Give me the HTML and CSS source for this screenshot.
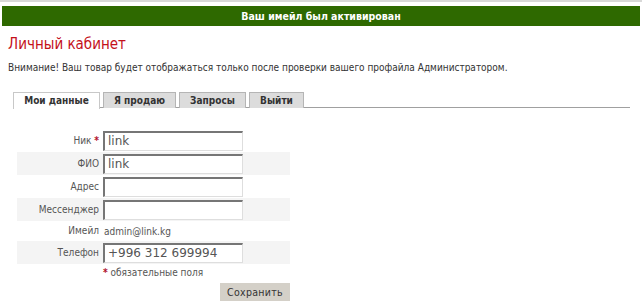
FILE: index.html
```html
<!DOCTYPE html>
<html lang="ru">
<head>
<meta charset="utf-8">
<link rel="stylesheet" href="styles.css">
</head>
<body>
<div class="topline"></div>
<div class="banner">Ваш имейл был активирован</div>
<h1 class="title">Личный кабинет</h1>
<p class="notice">Внимание! Ваш товар будет отображаться только после проверки вашего профайла Администратором.</p>
<div class="tabs">
  <span class="tab active">Мои данные</span>
  <span class="tab">Я продаю</span>
  <span class="tab">Запросы</span>
  <span class="tab">Выйти</span>
</div>
<div class="form">
  <div class="row"><span class="label">Ник <span class="req">*</span></span><span class="input">link</span></div>
  <div class="row alt"><span class="label">ФИО</span><span class="input">link</span></div>
  <div class="row"><span class="label">Адрес</span><span class="input"></span></div>
  <div class="row alt"><span class="label">Мессенджер</span><span class="input"></span></div>
  <div class="row plain"><span class="label">Имейл</span><span class="value">admin@link.kg</span></div>
  <div class="row alt"><span class="label">Телефон</span><span class="input">+996 312 699994</span></div>
  <div class="note"><span class="req">*</span> обязательные поля</div>
  <div class="actions"><span class="btn">Сохранить</span></div>
</div>
</body>
</html>
```
FILE: styles.css
```css
* { box-sizing: border-box; }
html, body { margin: 0; padding: 0; background: #fff; }
body { font-family: "DejaVu Sans Condensed", "Liberation Sans", sans-serif; font-size: 10px; color: #333; }
.topline { height: 2px; background: #d8d8d8; }
.banner { margin: 4px 2px 0 2px; height: 20px; background: #2e6900; color: #fff; font-weight: bold; text-align: center; line-height: 20px; font-size: 10.5px; }
.title { margin: 9px 0 0 8px; font-size: 15px; font-weight: normal; color: #c4101a; line-height: 18px; }
.notice { margin: 8px 0 0 8px; line-height: 14px; color: #333; }
.tabs { display: flex; gap: 3px; margin: 17px 12px 0 13px; border-bottom: 1px solid #a0a0a0; height: 16px; }
.tab { flex: none; height: 16px; border: 1px solid #b5b5b5; border-bottom: none; background: #dcdcdc; font-weight: bold; line-height: 15px; color: #333; text-align: center; white-space: nowrap; }
.tab.active { background: #fff; width: 87px; height: 17px; border-color: #c8c8c8; }
.tab:nth-child(2) { width: 73px; }
.tab:nth-child(3) { width: 67px; }
.tab:nth-child(4) { width: 55px; }
.form { margin: 21px 0 0 17px; width: 273px; }
.row { display: flex; align-items: center; height: 23px; }
.row.alt { background: #f4f4f4; }
.row.plain { height: 20px; }
.label { flex: none; width: 82px; margin-right: 4px; text-align: right; color: #555; line-height: 14px; }
.req { color: #b0102a; font-weight: bold; }
.input { display: block; width: 140px; height: 20px; border: 1px solid #dedede; border-top: 2px solid #767676; border-left: 2px solid #767676; background: #fff; font-family: "DejaVu Sans", sans-serif; font-size: 12px; color: #555; padding: 0 3px; line-height: 17px; }
.value { color: #555; padding-left: 1px; }
.note { padding-left: 86px; margin-top: 2px; line-height: 14px; color: #555; }
.actions { display: flex; justify-content: flex-end; margin-top: 3px; }
.btn { width: 70px; height: 18px; background: #d4d0c8; color: #333; text-align: center; line-height: 18px; font-size: 10.5px; letter-spacing: 0.3px; }
```
